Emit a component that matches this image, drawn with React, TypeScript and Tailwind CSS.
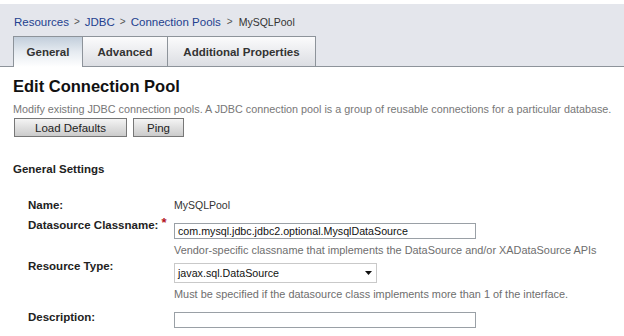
import React from 'react';

const tabs = [
    { label: 'General', width: 'w-[70px]', active: true },
    { label: 'Advanced', width: 'w-[85px]', active: false },
    { label: 'Additional Properties', width: 'w-[148px]', active: false },
];

const App = () => {
    return (
        <div className="w-[624px] h-[336px] overflow-hidden bg-white text-[#333] font-['Liberation_Sans',Arial,sans-serif] text-[11.5px] leading-[14px]">
            {/* Breadcrumb + tabs */}
            <div className="mt-[4px] h-[63px] bg-[#e4e6ec] border-b border-[#8d939a] flex flex-col justify-between pl-[13px]">
                <div className="pt-[11px] pl-[1px] flex items-center">
                    <span className="text-[#23418f]">Resources</span>
                    <span className="mx-[5px] text-[#555] text-[10px]">&gt;</span>
                    <span className="text-[#23418f]">JDBC</span>
                    <span className="mx-[5px] text-[#555] text-[10px]">&gt;</span>
                    <span className="text-[#23418f]">Connection Pools</span>
                    <span className="mx-[6px] text-[#555] text-[10px]">&gt;</span>
                    <span className="text-[#333] text-[10.5px]">MySQLPool</span>
                </div>
                <div className="flex items-end -mb-px">
                    {tabs.map((t, i) => (
                        <div
                            key={t.label}
                            className={
                                t.width +
                                ' h-[31px] flex items-center justify-center font-bold text-[#333] border-t border-r border-[#8d939a] ' +
                                (i === 0 ? 'border-l ' : '') +
                                (t.active
                                    ? 'bg-gradient-to-b from-[#c2cedb] via-[#e6ebf1] to-white'
                                    : 'border-b bg-gradient-to-b from-[#fbfbfc] to-[#dcdee3]')
                            }
                        >
                            {t.label}
                        </div>
                    ))}
                </div>
            </div>

            <div className="px-[13px]">
                <h1 className="mt-[9px] text-[16.5px] leading-[20px] font-bold text-[#111]">Edit Connection Pool</h1>
                <p className="mt-[6px] text-[#777] text-[10.8px] whitespace-nowrap">
                    Modify existing JDBC connection pools. A JDBC connection pool is a group of reusable connections for a particular database.
                </p>
                <div className="mt-[2px] ml-[1px] flex gap-[6px]">
                    <button className="w-[113px] h-[19px] border border-[#777] bg-gradient-to-b from-[#f4f4f4] to-[#cbcbcb] text-[#222] text-[11.5px] leading-[14px]">
                        Load Defaults
                    </button>
                    <button className="w-[51px] h-[19px] border border-[#777] bg-gradient-to-b from-[#f4f4f4] to-[#cbcbcb] text-[#222] text-[11.5px] leading-[14px]">
                        Ping
                    </button>
                </div>

                <h2 className="mt-[25px] font-bold text-[#222]">General Settings</h2>

                <div className="pl-[15px]">
                    {/* Name */}
                    <div className="mt-[22px] flex">
                        <div className="w-[146px] shrink-0 font-bold text-[#222]">Name:</div>
                        <div className="text-[#333] text-[10.5px]">MySQLPool</div>
                    </div>

                    {/* Datasource Classname */}
                    <div className="mt-[6px] flex">
                        <div className="w-[146px] shrink-0 font-bold text-[#222]">
                            Datasource Classname:
                            <span className="ml-[3px] text-[#b3141c] text-[13px] align-top leading-[10px]">*</span>
                        </div>
                        <div>
                            <div className="mt-[5px] w-[302px] h-[16px] border border-[#9aa0a6] flex items-center pl-[3px] text-[#111] text-[10.7px] leading-[14px]">
                                com.mysql.jdbc.jdbc2.optional.MysqlDataSource
                            </div>
                            <div className="mt-[4px] text-[#6e6e6e] text-[10.9px] whitespace-nowrap">
                                Vendor-specific classname that implements the DataSource and/or XADataSource APIs
                            </div>
                        </div>
                    </div>

                    {/* Resource Type */}
                    <div className="mt-[2px] flex">
                        <div className="w-[146px] shrink-0 font-bold text-[#222]">Resource Type:</div>
                        <div>
                            <div className="mt-[4px] w-[203px] h-[20px] border border-[#c9c9c9] flex items-center justify-between pl-[3px] pr-[4px] text-[#111] text-[10.7px]">
                                <span>javax.sql.DataSource</span>
                                <svg width="7" height="4" viewBox="0 0 7 4">
                                    <path d="M0 0 H7 L3.5 4 Z" fill="#111" />
                                </svg>
                            </div>
                            <div className="mt-[4px] text-[#6e6e6e] text-[10.9px] whitespace-nowrap">
                                Must be specified if the datasource class implements more than 1 of the interface.
                            </div>
                        </div>
                    </div>

                    {/* Description */}
                    <div className="mt-[9px] flex">
                        <div className="w-[146px] shrink-0 font-bold text-[#222]">Description:</div>
                        <div className="mt-[2px] w-[302px] h-[16px] border border-[#9aa0a6]" />
                    </div>
                </div>
            </div>
        </div>
    );
};

export default App;
